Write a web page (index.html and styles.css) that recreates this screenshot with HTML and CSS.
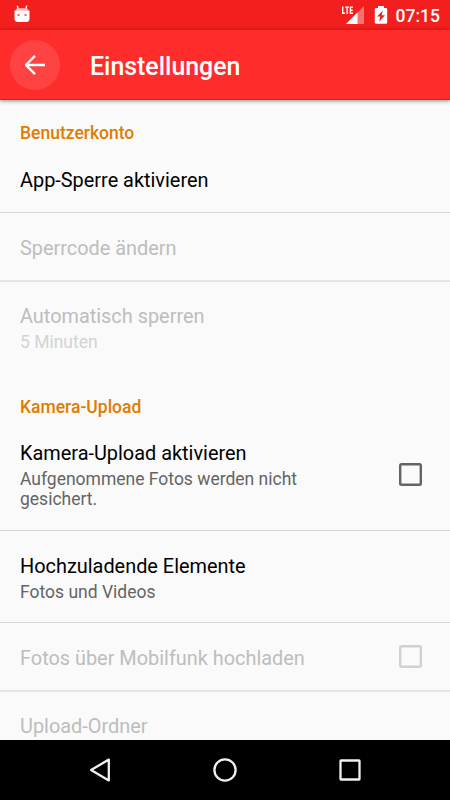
FILE: index.html
```html
<!DOCTYPE html>
<html lang="de">
<head>
<meta charset="utf-8">
<title>Einstellungen</title>
<link rel="stylesheet" href="styles.css">
</head>
<body>
<div class="screen">
  <div class="statusbar">
    <svg class="robot" width="16" height="18" viewBox="0 0 16 18">
      <path d="M3.200.600 4.300 4.500M12.800.600 11.700 4.500" stroke="#fff" stroke-width="1.300" fill="none"/>
      <path d="M3 3.300h10l1.800 2.500H1.200z" fill="#fcbcbc"/>
      <path d="M.5 5.500h15v8q0 3.500-3.500 3.500H4Q.5 17 .5 13.500z" fill="#fff"/>
      <path d="M3.500 9h2v2h-2zM10.500 9h2v2h-2z" fill="#f3696a"/>
    </svg>
    <span class="status-icons">
      <svg width="24" height="20" viewBox="0 0 24 20">
        <path d="M23 1v18H5z" fill="#f77172"/>
        <path d="M16.500 7.500V19H5z" fill="#fff"/>
        <path d="M1.700 1.500v6.800h2.300M4.200 2.100h3.800M6.100 2v7M12 2.100H9.400v6.200H12M9.400 5.200h2.300" fill="none" stroke="#fff" stroke-width="1.400"/>
      </svg>
      <svg class="battery" width="14" height="20" viewBox="0 0 14 20">
        <path d="M4 1h6v2h2q1.200 0 1.200 1.200v13.400q0 1.200-1.200 1.200H2q-1.200 0-1.200-1.200V4.200Q.8 3 2 3h2z" fill="#fff"/>
        <path d="M8.800 5.500 3 11.500h3.200L5.200 16.800 11 10.200H7.700z" fill="#f31e1e"/>
      </svg>
      <span class="clock">07:15</span>
    </span>
  </div>
  <header class="toolbar">
    <span class="back">
      <svg width="20" height="20" viewBox="0 0 20 20"><path d="M20 10H1.500M10 .9.9 10l9.100 9.100" fill="none" stroke="#fff" stroke-width="2.300"/></svg>
    </span>
    <h1>Einstellungen</h1>
  </header>
  <main class="list">
    <h2 class="category">Benutzerkonto</h2>
    <div class="row"><div class="name">App-Sperre aktivieren</div></div>
    <div class="row soft disabled"><div class="name">Sperrcode ändern</div></div>
    <div class="row last disabled"><div class="text"><div class="name">Automatisch sperren</div><div class="summary">5 Minuten</div></div></div>
    <h2 class="category">Kamera-Upload</h2>
    <div class="row tall"><div class="text"><div class="name">Kamera-Upload aktivieren</div><div class="summary">Aufgenommene Fotos werden nicht gesichert.</div></div><svg class="checkbox" width="23" height="23" viewBox="0 0 23 23"><rect x="1.200" y="1.200" width="20.600" height="20.600" rx="1.300"/></svg></div>
    <div class="row double"><div class="text"><div class="name">Hochzuladende Elemente</div><div class="summary">Fotos und Videos</div></div></div>
    <div class="row soft disabled"><div class="name">Fotos über Mobilfunk hochladen</div><svg class="checkbox" width="23" height="23" viewBox="0 0 23 23"><rect x="1.200" y="1.200" width="20.600" height="20.600" rx="1.300"/></svg></div>
    <div class="row last disabled"><div class="name">Upload-Ordner</div></div>
  </main>
  <nav class="navbar">
    <svg width="30" height="30" viewBox="0 0 30 30"><path d="M23.800 4.600v20.800L6.100 15z"/></svg>
    <svg width="30" height="30" viewBox="0 0 30 30"><circle cx="15" cy="15" r="10.600"/></svg>
    <svg width="30" height="30" viewBox="0 0 30 30"><rect x="5.500" y="5.500" width="19" height="19" rx=".5"/></svg>
  </nav>
</div>
</body>
</html>
```
FILE: styles.css
```css
* { box-sizing: border-box; }
body { margin: 0; font-family: Roboto, sans-serif; background: #fafafa; }
svg { display: block; flex: none; }
.screen { width: 450px; height: 800px; display: flex; flex-direction: column; overflow: hidden; }
.statusbar { height: 30px; flex: none; background: #f31e1e; color: #fff; display: flex; align-items: center; justify-content: space-between; padding: 0 10px 0 14px; }
.robot { margin-top: -3px; }
.status-icons { display: flex; align-items: center; }
.battery { margin-left: 9px; }
.clock { font-size: 17.5px; font-weight: 500; line-height: 20px; margin: 2px 0 0 8px; }
.toolbar { height: 70px; flex: none; z-index: 1; background: #ff2c2c; color: #fff; display: flex; align-items: center; padding-left: 10px; border-bottom: 1px solid #f31414; box-shadow: 0 1px 4px rgba(0,0,0,.45); }
.back { width: 50px; height: 50px; border-radius: 50%; background: #ff4343; display: flex; align-items: center; justify-content: center; }
h1 { margin: 5px 0 0 30px; font-size: 24.9px; line-height: 30px; font-weight: 500; }
.list { flex: 1; min-height: 0; overflow: hidden; }
.category { margin: 0; height: 45px; padding: 23px 20px 0; font-size: 17.5px; line-height: 21px; font-weight: 500; color: #e07c00; }
.row { height: 68px; padding: 24px 28px 0 20px; display: flex; justify-content: space-between; border-bottom: 1px solid #d6d6d6; }
.row.soft { height: 69px; border-bottom: 2px solid #e5e5e5; }
.row.last { height: 92px; padding-top: 23px; border-bottom: 0; }
.row.tall { height: 112px; padding-top: 23px; }
.row.double { height: 92px; }
.name { font-size: 19.9px; line-height: 24px; color: #000; }
.summary { font-size: 17.5px; line-height: 20px; color: #646464; margin-top: 3px; max-width: 300px; }
.checkbox { fill: none; stroke: #646464; stroke-width: 2.4; }
.tall .checkbox { margin-top: 21px; }
.disabled .name { color: #bdbdbd; }
.disabled .summary { color: #d3d3d3; }
.disabled .checkbox { stroke: #d1d1d1; margin-top: -2px; }
.navbar { height: 60px; flex: none; background: #000; display: flex; align-items: center; justify-content: space-between; padding: 0 85px; }
.navbar svg { fill: none; stroke: #f1f1f1; stroke-width: 2.3; stroke-linejoin: round; }
```
